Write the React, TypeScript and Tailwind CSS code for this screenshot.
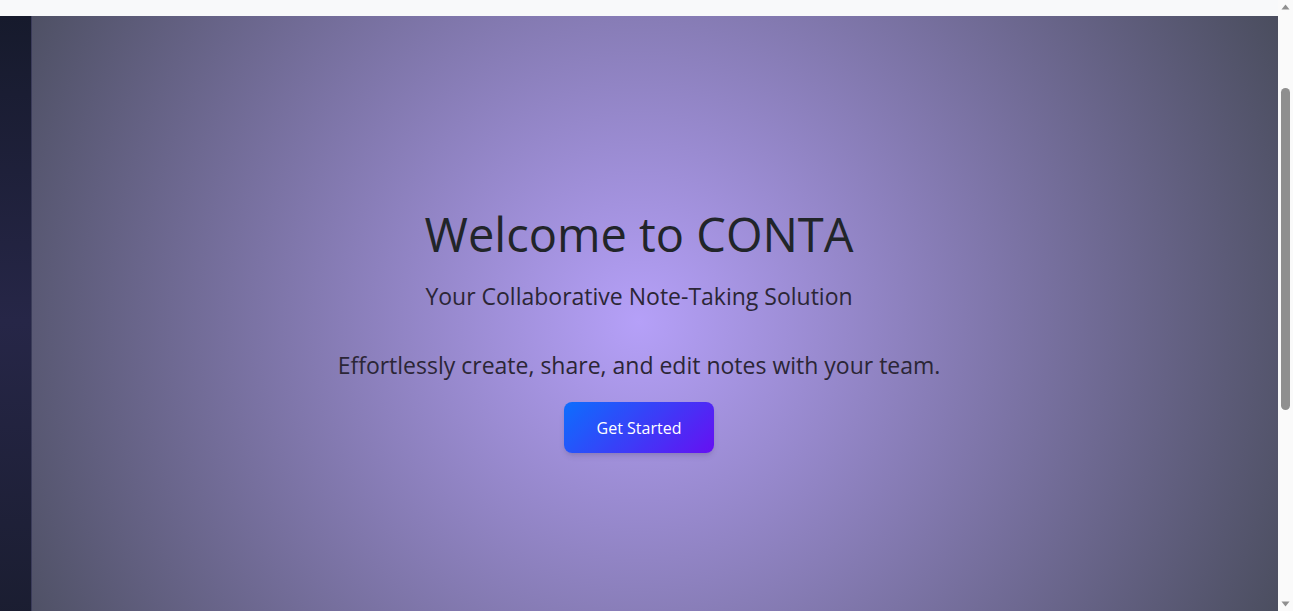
import { useEffect, useRef } from "react";

const ScrollBar = () => (
  <div className="w-[15px] h-screen shrink-0 bg-[#fafafa] flex flex-col items-center">
    <svg width="9" height="15" viewBox="0 0 9 15" className="shrink-0">
      <path d="M0.5 9.5 L4.5 4.5 L8.5 9.5 Z" fill="#8f8f8f" />
    </svg>
    <div className="h-[73px] shrink-0" />
    <div className="w-[9px] h-[322px] rounded-full bg-[#8f8f8f]" />
    <div className="flex-1" />
    <svg width="9" height="15" viewBox="0 0 9 15" className="shrink-0">
      <path d="M0.5 5.5 L4.5 10.5 L8.5 5.5 Z" fill="#8f8f8f" />
    </svg>
  </div>
);

const App = () => {
  const scrollRef = useRef<HTMLDivElement>(null);

  useEffect(() => {
    if (scrollRef.current) scrollRef.current.scrollTop = 136;
  }, []);

  return (
    <div
      className="flex h-screen bg-[#f8f9fa] text-[#212529]"
      style={{ fontFamily: '"Open Sans", "Noto Sans", sans-serif' }}
    >
      <div ref={scrollRef} className="flex-1 overflow-y-auto">
        <nav className="h-[152px] bg-[#f8f9fa]" />

        <section className="relative h-[611px] bg-[radial-gradient(circle,#b5a0f8,#4a4d5e)] flex flex-col items-center justify-center text-center pt-[16px]">
          <div className="absolute left-0 top-0 bottom-0 w-[32px] bg-[linear-gradient(to_bottom,#161a2c,#262647,#1a1d30)] border-r border-[#3b3c5a]" />

          <h1 className="text-[47px] leading-[1.2] font-normal mb-[17px]">
            Welcome to CONTA
          </h1>
          <p className="text-[23px] leading-[1.5] text-[#2b2636] mb-[34px]">
            Your Collaborative Note-Taking Solution
          </p>
          <p className="text-[23px] leading-[1.5] text-[#2b2636] mb-[20px]">
            Effortlessly create, share, and edit notes with your team.
          </p>
          <button className="w-[150px] h-[51px] rounded-lg bg-[linear-gradient(135deg,#0d6efd,#6610f2)] text-white text-base font-medium shadow-md">
            Get Started
          </button>
        </section>

        <footer className="h-[337px] bg-[#f8f9fa]" />
      </div>
      <ScrollBar />
    </div>
  );
};

export default App;
